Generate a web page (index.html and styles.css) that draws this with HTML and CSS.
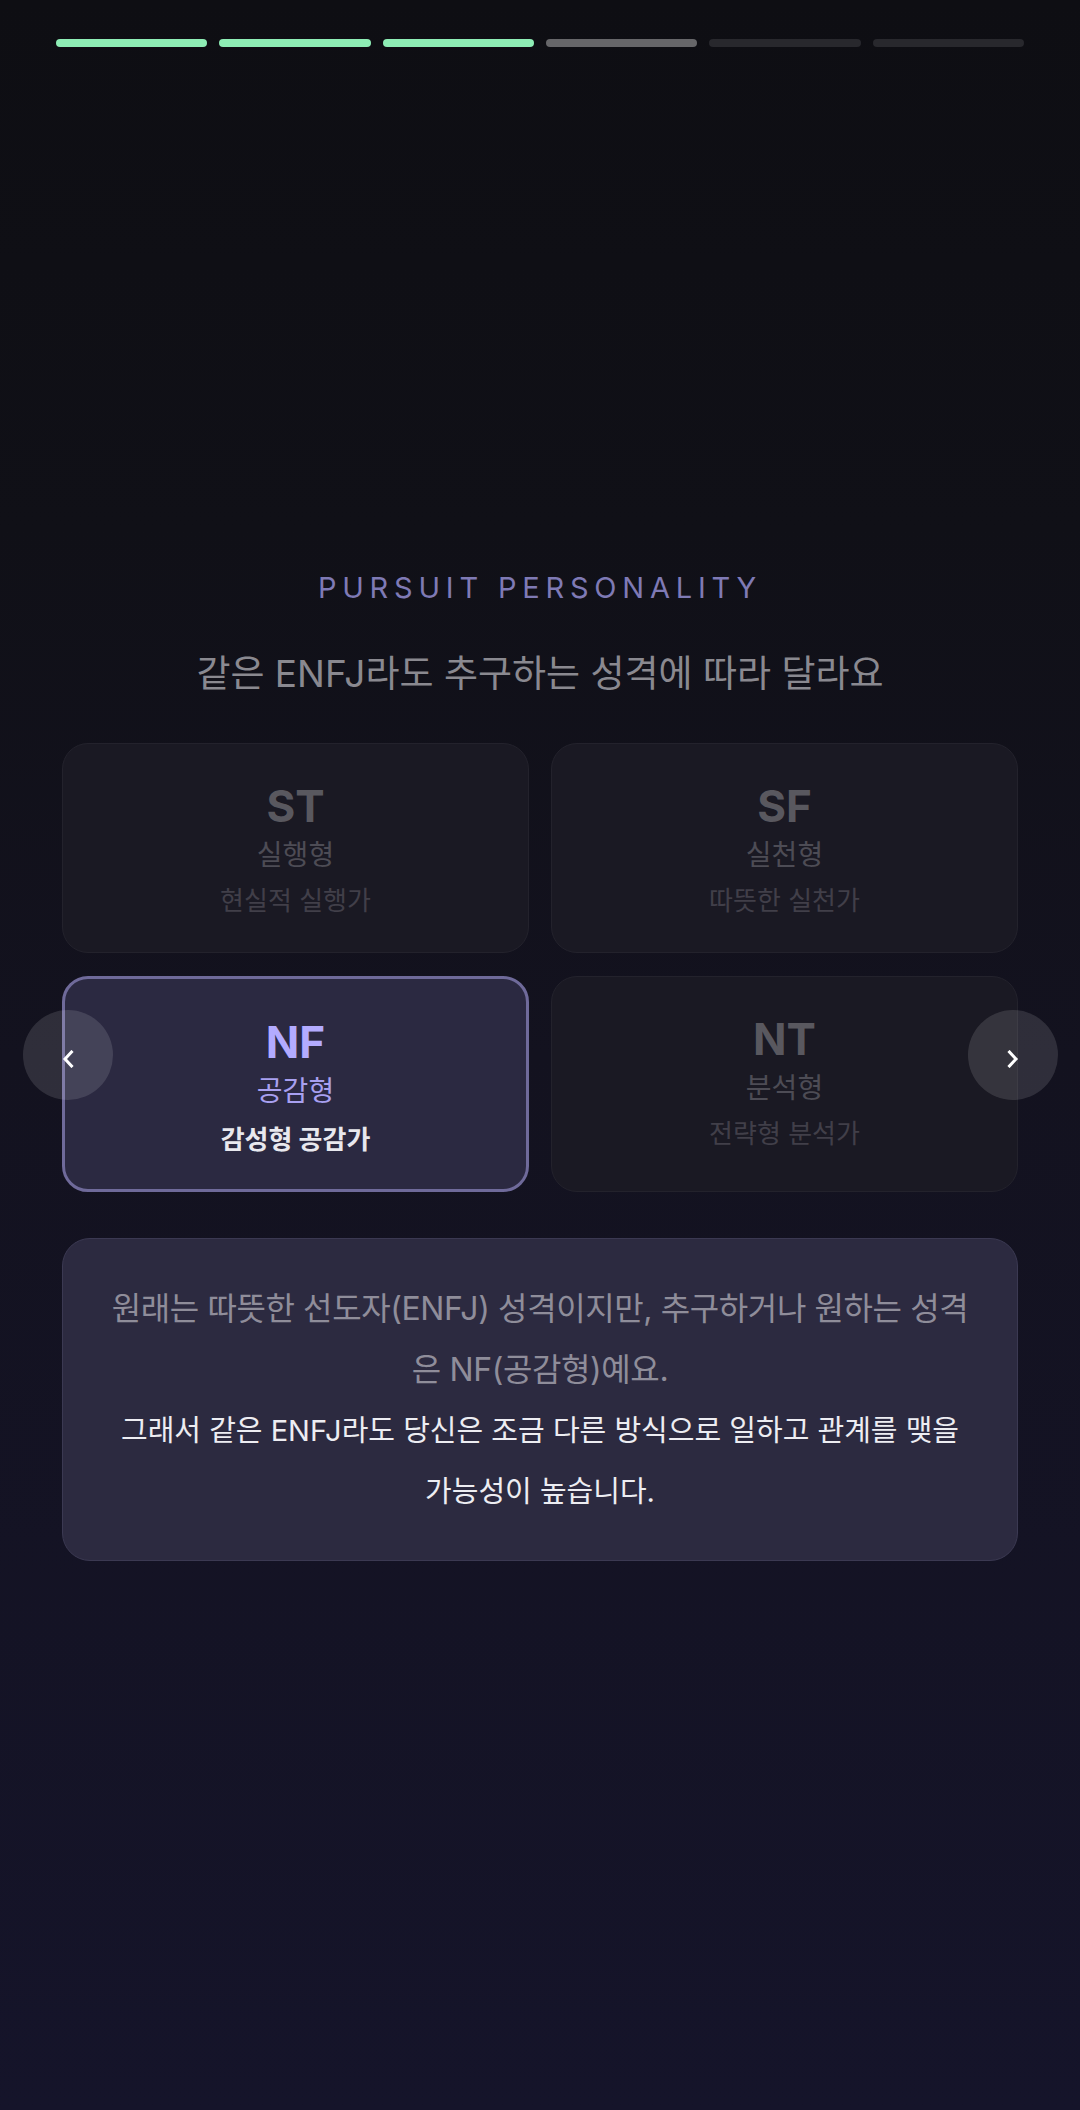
FILE: index.html
```html
<!DOCTYPE html>
<html lang="ko">
<head>
<meta charset="utf-8">
<title>Pursuit Personality</title>
<link rel="stylesheet" href="styles.css">
</head>
<body>
<div class="page">
  <div class="progress">
    <span class="bar bar-done"></span>
    <span class="bar bar-done"></span>
    <span class="bar bar-done"></span>
    <span class="bar bar-current"></span>
    <span class="bar"></span>
    <span class="bar"></span>
  </div>
  <main class="content">
    <p class="eyebrow">PURSUIT PERSONALITY</p>
    <h1 class="title">같은 ENFJ라도 추구하는 성격에 따라 달라요</h1>
    <div class="carousel">
      <div class="grid">
        <div class="card">
          <div class="card-code">ST</div>
          <div class="card-type">실행형</div>
          <div class="card-desc">현실적 실행가</div>
        </div>
        <div class="card">
          <div class="card-code">SF</div>
          <div class="card-type">실천형</div>
          <div class="card-desc">따뜻한 실천가</div>
        </div>
        <div class="card card-selected">
          <div class="card-code">NF</div>
          <div class="card-type">공감형</div>
          <div class="card-desc">감성형 공감가</div>
        </div>
        <div class="card">
          <div class="card-code">NT</div>
          <div class="card-type">분석형</div>
          <div class="card-desc">전략형 분석가</div>
        </div>
      </div>
      <button class="nav nav-prev" aria-label="이전">
        <svg width="12" height="18" viewBox="0 0 12 18"><polyline points="9.5,2 3,9 9.5,16" fill="none" stroke="#ffffff" stroke-width="3" stroke-linecap="square" stroke-linejoin="miter"/></svg>
      </button>
      <button class="nav nav-next" aria-label="다음">
        <svg width="12" height="18" viewBox="0 0 12 18"><polyline points="2.5,2 9,9 2.5,16" fill="none" stroke="#ffffff" stroke-width="3" stroke-linecap="square" stroke-linejoin="miter"/></svg>
      </button>
    </div>
    <div class="info">
      <p class="info-muted">원래는 따뜻한 선도자(ENFJ) 성격이지만, 추구하거나 원하는 성격은 NF(공감형)예요.</p>
      <p class="info-strong">그래서 같은 ENFJ라도 당신은 조금 다른 방식으로 일하고 관계를 맺을 가능성이 높습니다.</p>
    </div>
  </main>
</div>
</body>
</html>
```

FILE: styles.css
```css
* {
  box-sizing: border-box;
}

html, body {
  margin: 0;
  padding: 0;
}

body {
  width: 1080px;
  min-height: 2110px;
  background: linear-gradient(180deg, #0e0e13 0%, #101017 25%, #13121f 50%, #15142a 100%);
  font-family: Inter, "Noto Sans CJK KR", "Noto Sans", sans-serif;
  color: #ffffff;
}

.page {
  min-height: 2110px;
}

.progress {
  display: flex;
  gap: 12px;
  padding: 39px 56px 0;
}

.bar {
  flex: 1;
  height: 8px;
  border-radius: 4px;
  background: #28282d;
}

.bar-done {
  background: #8eedb5;
}

.bar-current {
  background: #666669;
}

.content {
  display: flex;
  flex-direction: column;
  align-items: stretch;
  padding: 523px 62px 0;
}

.eyebrow {
  margin: 0;
  text-align: center;
  font-size: 29px;
  line-height: 36px;
  letter-spacing: 0.2em;
  color: #7f7ab5;
  font-weight: 400;
}

.title {
  margin: 44px 0 0;
  text-align: center;
  font-size: 37px;
  line-height: 48px;
  font-weight: 400;
  color: #8a8990;
}

.carousel {
  position: relative;
  margin-top: 45px;
}

.grid {
  display: grid;
  grid-template-columns: 1fr 1fr;
  gap: 23px 22px;
}

.card {
  display: flex;
  flex-direction: column;
  align-items: center;
  padding: 36px 16px 34px;
  border-radius: 26px;
  background: #1a1923;
  border: 1px solid #23222c;
}

.card-code {
  font-size: 44px;
  line-height: 52px;
  font-weight: 700;
  color: #59585f;
}

.card-type {
  margin-top: 6px;
  font-size: 28px;
  line-height: 34px;
  color: #4d4c55;
}

.card-desc {
  margin-top: 12px;
  font-size: 26px;
  line-height: 34px;
  color: #413f49;
}

.card-selected {
  padding-top: 37px;
  padding-bottom: 32px;
  background: #2b2941;
  border: 3px solid #6f6a9a;
}

.card-selected .card-code {
  color: #b3abff;
}

.card-selected .card-type {
  color: #a8a0f0;
}

.card-selected .card-desc {
  margin-top: 15px;
  font-weight: 700;
  color: #e8e8ee;
}

.nav {
  position: absolute;
  top: 267px;
  width: 90px;
  height: 90px;
  padding: 0;
  border: none;
  border-radius: 50%;
  background: rgba(255, 255, 255, 0.12);
  display: flex;
  align-items: center;
  justify-content: center;
}

.nav svg {
  margin-top: 8px;
}

.nav-prev {
  left: -39px;
}

.nav-next {
  right: -40px;
}

.info {
  margin-top: 46px;
  padding: 39px 44px 38px;
  border-radius: 28px;
  background: #2c2a40;
  border: 1px solid #3b3952;
  text-align: center;
}

.info p {
  margin: 0;
  line-height: 61px;
}

.info-muted {
  font-size: 32px;
  letter-spacing: -0.4px;
  color: #8f8d9a;
}

.info-strong {
  font-size: 29px;
  color: #ededf2;
}
```
